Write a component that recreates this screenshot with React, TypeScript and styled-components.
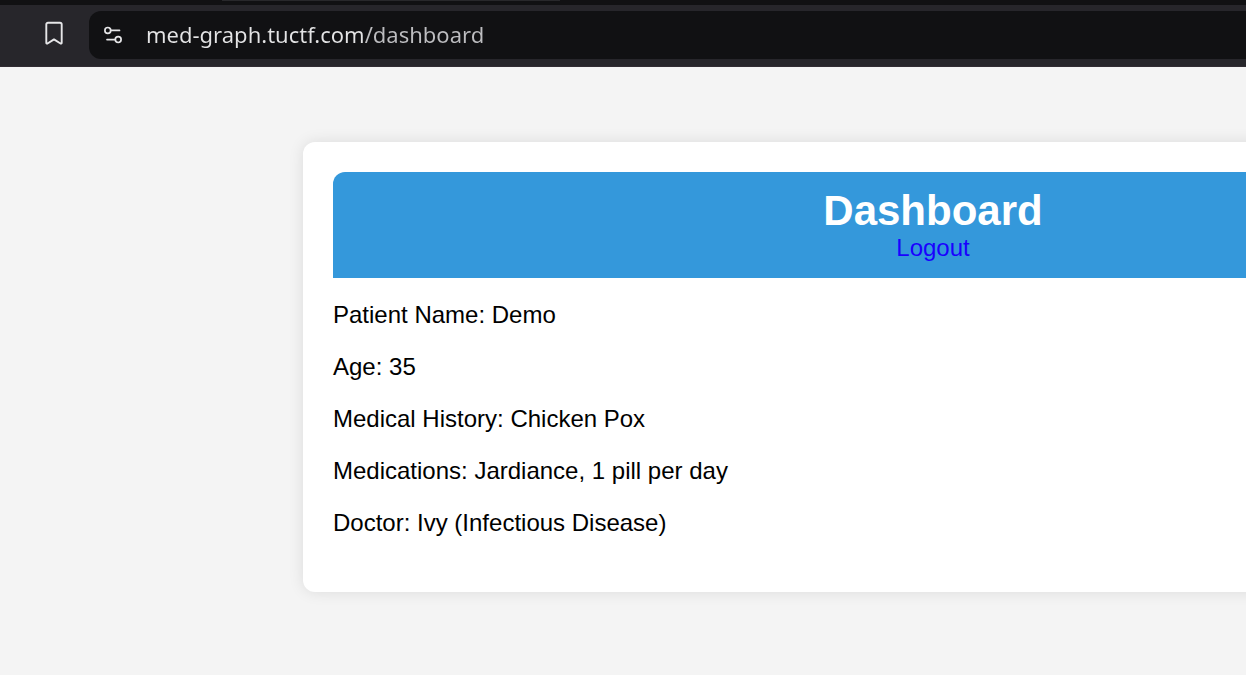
import React from 'react';
import styled, { createGlobalStyle } from 'styled-components';

const GlobalStyle = createGlobalStyle`
  *, *::before, *::after { box-sizing: border-box; }
  body {
    margin: 0;
    background: #f4f4f4;
    color: #000;
    font-family: "Liberation Sans", Arial, sans-serif;
    font-size: 24px;
    line-height: 26px;
  }
`;

const Window = styled.div`
  display: flex;
  flex-direction: column;
  min-height: 100vh;
  overflow: hidden;
`;

const TabStrip = styled.div`
  height: 5px;
  padding-left: 222px;
  background: #111113;
`;

const TabEdge = styled.div`
  width: 338px;
  height: 1px;
  background: #28282b;
`;

const Toolbar = styled.header`
  display: flex;
  align-items: center;
  height: 62px;
  padding: 6px 0 7px 42px;
  background: #27262b;
  border-bottom: 1px solid #312c33;
`;

const IconButton = styled.button`
  display: flex;
  align-items: center;
  justify-content: center;
  flex: none;
  width: 24px;
  height: 28px;
  padding: 0;
  border: 0;
  background: none;
  color: #e6e6e8;
`;

const BookmarkButton = styled(IconButton)`
  margin: 0 23px 4px 0;
`;

const AddressBar = styled.form`
  display: flex;
  align-items: center;
  flex: 1;
  height: 48px;
  padding-left: 12px;
  border-radius: 12px 0 0 12px;
  background: #111113;
`;

const AddressInput = styled.input`
  flex: 1;
  min-width: 0;
  height: 46px;
  margin: 0 0 2px 21px;
  padding: 0;
  border: 0;
  outline: 0;
  background: linear-gradient(to right, #e4e4e5 218px, #bdbdc0 218px);
  background-clip: text;
  -webkit-background-clip: text;
  -webkit-text-fill-color: transparent;
  color: #e4e4e5;
  font-family: "Noto Sans", sans-serif;
  font-size: 22px;
`;

const Main = styled.main`
  display: flex;
  flex: 1;
  align-items: flex-start;
  padding: 75px 0 75px 303px;
`;

const Card = styled.section`
  flex: none;
  width: 1260px;
  padding: 30px;
  border-radius: 12px;
  background: #fff;
  box-shadow: 0 0 15px rgba(0, 0, 0, 0.1);
`;

const Banner = styled.div`
  display: flex;
  flex-direction: column;
  align-items: center;
  padding: 15px 15px 17px;
  border-radius: 12px 12px 0 0;
  background: #3498db;
`;

const Title = styled.h1`
  margin: 0;
  color: #fff;
  font-size: 42px;
  line-height: 48px;
`;

const LogoutLink = styled.a`
  color: #1a00ff;
  text-decoration: none;
`;

const Details = styled.div`
  display: flex;
  flex-direction: column;
  gap: 26px;
  padding: 24px 0 26px;
`;

const Detail = styled.p`
  margin: 0;
`;

const details = [
  'Patient Name: Demo',
  'Age: 35',
  'Medical History: Chicken Pox',
  'Medications: Jardiance, 1 pill per day',
  'Doctor: Ivy (Infectious Disease)',
];

const BookmarkIcon = () => (
  <svg width="20" height="26" viewBox="0 0 20 26" fill="none" stroke="currentColor" strokeWidth="1.9" strokeLinejoin="round" aria-hidden="true">
    <path d="M4 2.7h12a1.7 1.7 0 0 1 1.7 1.7v18.3q0 1.2-1.2.8L10 19.4l-6.5 4.1q-1.2.4-1.2-.8V4.4A1.7 1.7 0 0 1 4 2.7z" />
  </svg>
);

const SiteSettingsIcon = () => (
  <svg width="22" height="22" viewBox="0 0 22 22" fill="none" stroke="currentColor" strokeWidth="1.7" strokeLinecap="round" aria-hidden="true">
    <circle cx="5.8" cy="6.4" r="2.9" />
    <path d="M8.7 6.4h8.8M5 15.600h8.300" />
    <circle cx="16.2" cy="15.6" r="2.9" />
  </svg>
);

export default function App() {
  return (
    <Window>
      <GlobalStyle />
      <TabStrip>
        <TabEdge />
      </TabStrip>
      <Toolbar>
        <BookmarkButton type="button" aria-label="Bookmark this page">
          <BookmarkIcon />
        </BookmarkButton>
        <AddressBar onSubmit={(event) => event.preventDefault()}>
          <IconButton type="button" aria-label="Site settings">
            <SiteSettingsIcon />
          </IconButton>
          <AddressInput type="text" aria-label="Address" defaultValue="med-graph.tuctf.com/dashboard" spellCheck={false} />
        </AddressBar>
      </Toolbar>
      <Main>
        <Card>
          <Banner>
            <Title>Dashboard</Title>
            <LogoutLink href="/logout">Logout</LogoutLink>
          </Banner>
          <Details>
            {details.map((detail) => (
              <Detail key={detail}>{detail}</Detail>
            ))}
          </Details>
        </Card>
      </Main>
    </Window>
  );
}
